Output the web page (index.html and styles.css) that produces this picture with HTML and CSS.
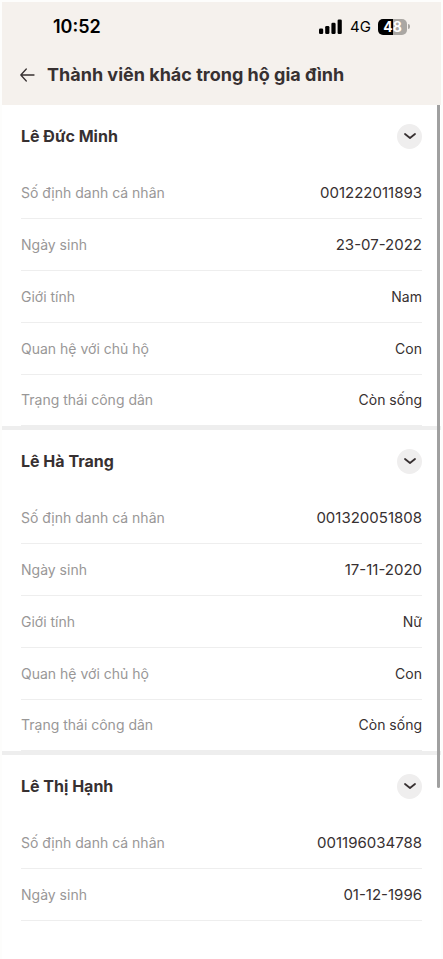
FILE: index.html
```
<!DOCTYPE html>
<html lang="vi">
<head>
<meta charset="utf-8">
<meta name="viewport" content="width=device-width, initial-scale=1">
<title>Thành viên khác trong hộ gia đình</title>
<link rel="stylesheet" href="styles.css">
</head>
<body>
<div class="screen">
  <header class="top">
    <div class="status">
      <span class="time">10:52</span>
      <div class="indicators">
        <svg class="signal" viewBox="0 0 24 16" aria-hidden="true">
          <rect x="0" y="9.5" width="4.2" height="5.5" rx="1.3"/>
          <rect x="6.2" y="7" width="4.2" height="8" rx="1.3"/>
          <rect x="12.4" y="3.7" width="4.2" height="11.3" rx="1.3"/>
          <rect x="18.6" y="0.5" width="4.2" height="14.5" rx="1.3"/>
        </svg>
        <span class="network">4G</span>
        <span class="battery"><span class="level">48</span></span>
      </div>
    </div>
    <div class="titlebar">
      <button class="back" type="button" aria-label="Quay lại">
        <svg viewBox="0 0 16 14" aria-hidden="true"><path d="M7.3 1 1.8 7l5.500 6M1.800 7H15"/></svg>
      </button>
      <h1>Thành viên khác trong hộ gia đình</h1>
    </div>
  </header>
  <main class="members">
    <section class="member">
      <div class="member-head">
        <h2>Lê Đức Minh</h2>
        <button class="toggle" type="button" aria-label="Thu gọn Lê Đức Minh"><svg viewBox="0 0 12 8" aria-hidden="true"><path d="M1 2 6 6l5-4"/></svg></button>
      </div>
      <dl>
        <div class="row"><dt>Số định danh cá nhân</dt><dd class="number">001222011893</dd></div>
        <div class="row"><dt>Ngày sinh</dt><dd class="number">23-07-2022</dd></div>
        <div class="row"><dt>Giới tính</dt><dd>Nam</dd></div>
        <div class="row"><dt>Quan hệ với chủ hộ</dt><dd>Con</dd></div>
        <div class="row"><dt>Trạng thái công dân</dt><dd>Còn sống</dd></div>
      </dl>
    </section>
    <section class="member">
      <div class="member-head">
        <h2>Lê Hà Trang</h2>
        <button class="toggle" type="button" aria-label="Thu gọn Lê Hà Trang"><svg viewBox="0 0 12 8" aria-hidden="true"><path d="M1 2 6 6l5-4"/></svg></button>
      </div>
      <dl>
        <div class="row"><dt>Số định danh cá nhân</dt><dd class="number">001320051808</dd></div>
        <div class="row"><dt>Ngày sinh</dt><dd class="number">17-11-2020</dd></div>
        <div class="row"><dt>Giới tính</dt><dd>Nữ</dd></div>
        <div class="row"><dt>Quan hệ với chủ hộ</dt><dd>Con</dd></div>
        <div class="row"><dt>Trạng thái công dân</dt><dd>Còn sống</dd></div>
      </dl>
    </section>
    <section class="member">
      <div class="member-head">
        <h2>Lê Thị Hạnh</h2>
        <button class="toggle" type="button" aria-label="Thu gọn Lê Thị Hạnh"><svg viewBox="0 0 12 8" aria-hidden="true"><path d="M1 2 6 6l5-4"/></svg></button>
      </div>
      <dl>
        <div class="row"><dt>Số định danh cá nhân</dt><dd class="number">001196034788</dd></div>
        <div class="row"><dt>Ngày sinh</dt><dd class="number">01-12-1996</dd></div>
      </dl>
    </section>
    <div class="scrollbar"></div>
  </main>
</div>
</body>
</html>
```
FILE: styles.css
```
* {
  box-sizing: border-box;
}

body {
  margin: 0;
  background: #fdfdfc;
  color: #373031;
  font-family: Inter, "Noto Sans", sans-serif;
  font-size: 14px;
  line-height: 20px;
}

button {
  display: flex;
  align-items: center;
  justify-content: center;
  padding: 0;
  border: 0;
  background: none;
}

svg {
  display: block;
}

h1,
h2,
dl,
dd {
  margin: 0;
}

.screen {
  display: flex;
  flex-direction: column;
  min-height: 100vh;
  padding: 2px 2px 0;
}

.top {
  padding-bottom: 8px;
  background: #f5f1ed;
}

.status {
  display: flex;
  align-items: center;
  justify-content: space-between;
  height: 50px;
  padding: 0 34px 0 51px;
  color: #000;
}

.time {
  font-size: 18px;
  font-weight: 600;
}

.indicators {
  display: flex;
  align-items: center;
  gap: 7px;
}

.signal {
  width: 24px;
  height: 16px;
}

.network {
  font-size: 15px;
}

.battery {
  position: relative;
  width: 29px;
  height: 16px;
  border-radius: 5px;
  background: linear-gradient(90deg, #000 50%, #aaa7a3 50%);
}

.battery::after {
  content: "";
  position: absolute;
  top: 5px;
  right: -3px;
  width: 2px;
  height: 5px;
  border-radius: 0 2px 2px 0;
  background: #aaa7a3;
}

.level {
  display: block;
  color: #fff;
  font-size: 14px;
  font-weight: 700;
  line-height: 16px;
  text-align: center;
}

.titlebar {
  display: flex;
  align-items: center;
  gap: 12px;
  height: 45px;
  padding: 0 17px;
}

.back svg {
  width: 16px;
  height: 14px;
}

path {
  fill: none;
  stroke: #373031;
  stroke-width: 1.3;
  stroke-linecap: round;
  stroke-linejoin: round;
}

h1 {
  font-size: 18px;
  font-weight: 700;
}

.members {
  position: relative;
  flex: 1;
  background: #fff;
}

.member + .member {
  border-top: 4px solid #eee;
}

.member-head {
  display: flex;
  align-items: center;
  justify-content: space-between;
  height: 62px;
  padding: 0 19px;
}

h2 {
  font-size: 16px;
  font-weight: 700;
}

.toggle {
  width: 25px;
  height: 25px;
  border-radius: 50%;
  background: #efeeee;
}

.toggle svg {
  width: 12px;
  height: 8px;
}

.toggle path {
  stroke-width: 1.8;
}

dl {
  padding: 0 19px;
}

.row {
  display: flex;
  align-items: center;
  justify-content: space-between;
  height: 52px;
  border-bottom: 1px solid #eee;
}

.row:nth-child(5) {
  height: 51px;
}

dt {
  color: #999797;
}

.number {
  font-size: 15px;
}

.scrollbar {
  position: absolute;
  top: 0;
  right: 1px;
  width: 3px;
  height: 80%;
  border-radius: 0 0 2px 2px;
  background: #a0a0a0;
}
```
